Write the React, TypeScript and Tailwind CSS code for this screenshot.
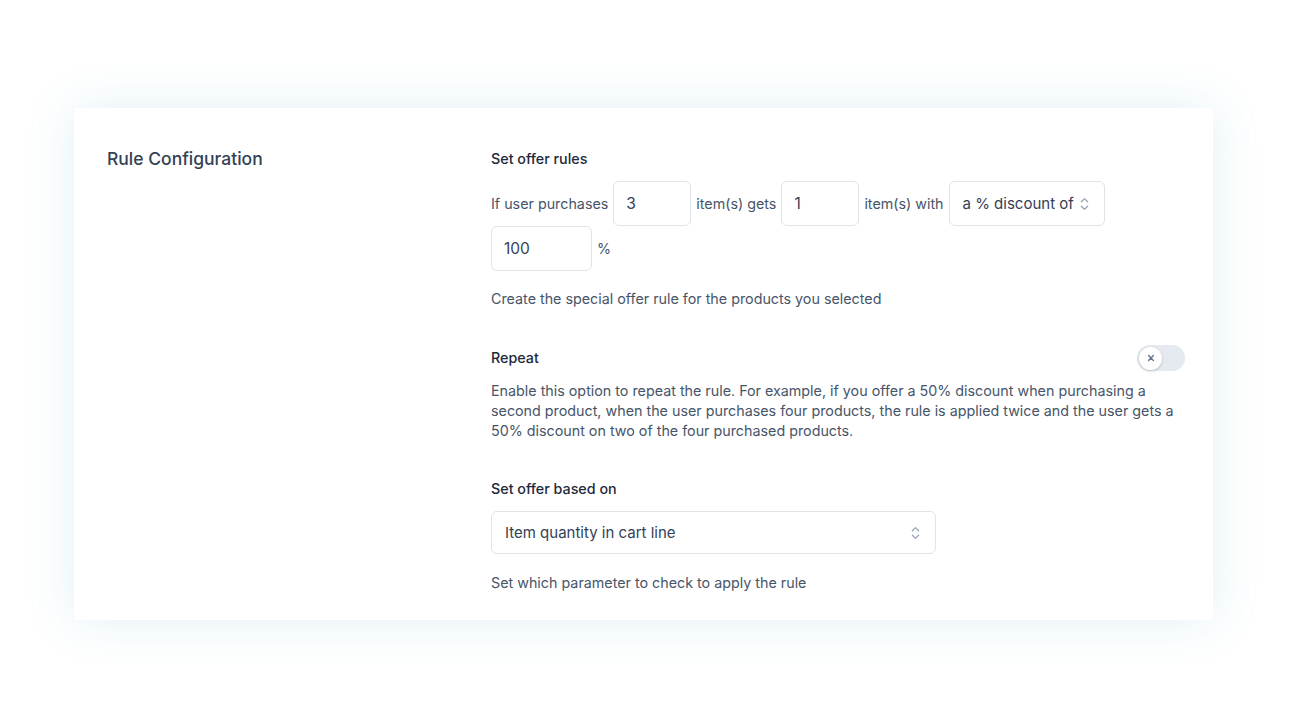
import React from "react";

const ChevronUpDown = ({ className = "" }: { className?: string }) => (
  <svg viewBox="0 0 12 18" className={className} fill="none" stroke="currentColor" strokeWidth="1.4" strokeLinecap="round" strokeLinejoin="round">
    <path d="M2.5 6.5 6 3l3.5 3.5" />
    <path d="M2.5 11.5 6 15l3.5-3.5" />
  </svg>
);

const NumberBox = ({ value, width }: { value: string; width: string }) => (
  <div
    className={`${width} h-[45px] flex items-center px-[12px] rounded-[6px] border border-[#dfe3e8] bg-white text-[15.5px] text-[#334155]`}
  >
    {value}
  </div>
);

const App = () => {
  return (
    <div
      className="min-h-[725px] bg-white pt-[108px] px-[74px]"
      style={{ fontFamily: "Inter, 'Open Sans', sans-serif" }}
    >
      <div className="w-[1139px] bg-white shadow-[0_0_45px_rgba(70,170,200,0.16)] grid grid-cols-[384px_1fr] pl-[33px] pr-[28px] pb-[27px]">
        {/* Left: section title */}
        <div className="pt-[39px]">
          <h2 className="text-[17.5px] leading-[24px] font-medium text-[#334155]">Rule Configuration</h2>
        </div>

        {/* Right: settings */}
        <div className="pt-[41px] text-[14.3px] leading-[20px] text-[#475569]">
          <h3 className="font-medium text-[#1e293b]">Set offer rules</h3>

          <div className="mt-[12px] flex flex-wrap items-center gap-x-[5px] w-[640px]">
            <span>If user purchases</span>
            <NumberBox value="3" width="w-[78px]" />
            <span>item(s) gets</span>
            <NumberBox value="1" width="w-[78px]" />
            <span>item(s) with</span>
            <div className="w-[156px] h-[45px] flex items-center justify-between whitespace-nowrap pl-[13px] pr-[14px] rounded-[6px] border border-[#dfe3e8] text-[15px] text-[#334155]">
              <span>a % discount of</span>
              <ChevronUpDown className="w-[11px] h-[16px] text-[#94a3b8]" />
            </div>
            <NumberBox value="100" width="w-[101px]" />
            <span>%</span>
          </div>

          <p className="mt-[18px]">Create the special offer rule for the products you selected</p>

          <div className="mt-[36px] flex items-center justify-between">
            <h3 className="font-medium text-[#1e293b]">Repeat</h3>
            <div className="w-[48px] h-[26px] rounded-full bg-[#e5e9f0] p-[2px] flex items-center">
              <div className="w-[23px] h-[23px] rounded-full bg-white shadow-[0_1px_3px_rgba(0,0,0,0.2)] flex items-center justify-center">
                <svg viewBox="0 0 10 10" className="w-[8px] h-[8px] text-[#64748b]" stroke="currentColor" strokeWidth="1.8" strokeLinecap="round">
                  <path d="M2 2l6 6M8 2 2 8" />
                </svg>
              </div>
            </div>
          </div>

          <p className="mt-[10px]">
            Enable this option to repeat the rule. For example, if you offer a 50% discount when purchasing a second
            product, when the user purchases four products, the rule is applied twice and the user gets a 50% discount
            on two of the four purchased products.
          </p>

          <h3 className="mt-[38px] font-medium text-[#1e293b]">Set offer based on</h3>

          <div className="mt-[12px] w-[445px] h-[43px] flex items-center justify-between pl-[13px] pr-[14px] rounded-[6px] border border-[#dfe3e8] text-[15px] text-[#334155]">
            <span>Item quantity in cart line</span>
            <ChevronUpDown className="w-[11px] h-[16px] text-[#94a3b8]" />
          </div>

          <p className="mt-[19px]">Set which parameter to check to apply the rule</p>
        </div>
      </div>
    </div>
  );
};

export default App;
